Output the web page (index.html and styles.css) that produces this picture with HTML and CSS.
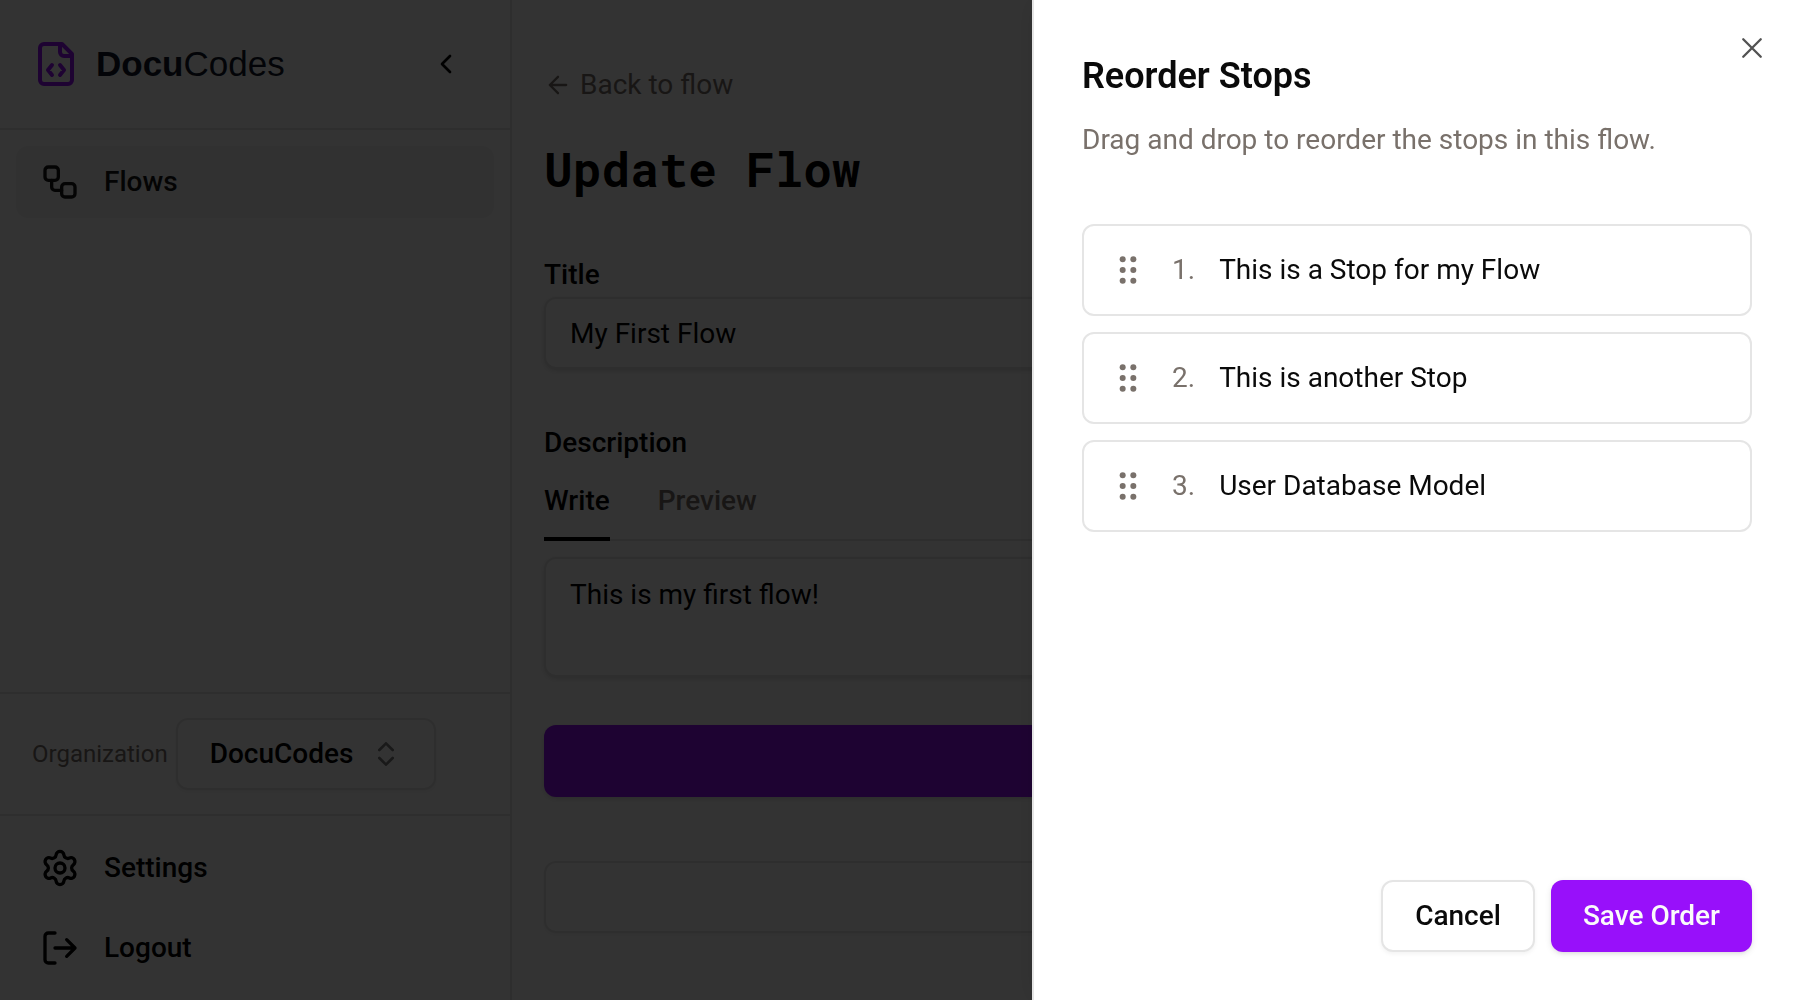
FILE: index.html
```html
<!DOCTYPE html>
<html lang="en">
<head>
<meta charset="utf-8">
<meta name="viewport" content="width=device-width, initial-scale=1">
<title>Update Flow - DocuCodes</title>
<link rel="stylesheet" href="styles.css">
</head>
<body>
<div class="app">
  <aside class="sidebar">
    <header class="brand">
      <a class="brand-link" href="#">
        <svg class="icon brand-icon" viewBox="0 0 24 24" aria-hidden="true"><path d="M10 12.5 8 15l2 2.5M14 12.5l2 2.5-2 2.5M14 2v4a2 2 0 0 0 2 2h4M15 2H6a2 2 0 0 0-2 2v16a2 2 0 0 0 2 2h12a2 2 0 0 0 2-2V7z"/></svg>
        <span class="brand-name"><strong>Docu</strong>Codes</span>
      </a>
      <button class="collapse" type="button" aria-label="Collapse sidebar">
        <svg class="icon icon-md" viewBox="0 0 24 24" aria-hidden="true"><path d="m15 18-6-6 6-6"/></svg>
      </button>
    </header>
    <nav class="nav nav-main">
      <a class="nav-item active" href="#">
        <svg class="icon icon-lg" viewBox="0 0 24 24" aria-hidden="true"><rect x="3" y="3" width="8" height="8" rx="2"/><path d="M7 11v4a2 2 0 0 0 2 2h4"/><rect x="13" y="13" width="8" height="8" rx="2"/></svg>
        Flows
      </a>
    </nav>
    <div class="org">
      <label for="org">Organization</label>
      <div class="org-picker">
        <select id="org"><option>DocuCodes</option></select>
        <svg class="icon icon-md org-caret" viewBox="0 0 24 24" aria-hidden="true"><path d="m7 15 5 5 5-5M7 9l5-5 5 5"/></svg>
      </div>
    </div>
    <nav class="nav">
      <a class="nav-item" href="#">
        <svg class="icon icon-lg" viewBox="0 0 24 24" aria-hidden="true"><path d="M9.671 4.136a2.34 2.34 0 0 1 4.659 0 2.34 2.34 0 0 0 3.319 1.915 2.34 2.34 0 0 1 2.33 4.033 2.34 2.34 0 0 0 0 3.831 2.34 2.34 0 0 1-2.33 4.033 2.34 2.34 0 0 0-3.319 1.915 2.34 2.34 0 0 1-4.659 0 2.34 2.34 0 0 0-3.32-1.915 2.34 2.34 0 0 1-2.33-4.033 2.34 2.34 0 0 0 0-3.831A2.34 2.34 0 0 1 6.35 6.051a2.34 2.34 0 0 0 3.319-1.915"/><circle cx="12" cy="12" r="3"/></svg>
        Settings
      </a>
      <a class="nav-item" href="#">
        <svg class="icon icon-lg" viewBox="0 0 24 24" aria-hidden="true"><path d="M9 21H5a2 2 0 0 1-2-2V5a2 2 0 0 1 2-2h4M16 17l5-5-5-5M21 12H9"/></svg>
        Logout
      </a>
    </nav>
  </aside>

  <main class="main">
    <a class="back" href="#">
      <svg class="icon icon-sm" viewBox="0 0 24 24" aria-hidden="true"><path d="m12 19-7-7 7-7M19 12H5"/></svg>
      Back to flow
    </a>
    <h1>Update Flow</h1>
    <form class="form">
      <div class="field">
        <label for="title">Title</label>
        <input id="title" class="control" type="text" value="My First Flow">
      </div>
      <div class="field">
        <label for="description">Description</label>
        <div class="tabs" role="tablist">
          <button class="tab selected" type="button" role="tab" aria-selected="true">Write</button>
          <button class="tab" type="button" role="tab" aria-selected="false">Preview</button>
        </div>
        <textarea id="description" class="control">This is my first flow!</textarea>
      </div>
      <button class="btn primary" type="submit" aria-label="Save"></button>
    </form>
    <button class="btn outline" type="button" aria-label="Reorder"></button>
  </main>
</div>

<div class="overlay"></div>

<section class="drawer" role="dialog" aria-labelledby="drawer-title">
  <button class="close" type="button" aria-label="Close">
    <svg viewBox="0 0 15 15" aria-hidden="true"><path d="M3.4 3.4l8.2 8.2M11.6 3.4l-8.2 8.2"/></svg>
  </button>
  <h2 id="drawer-title">Reorder Stops</h2>
  <p class="hint">Drag and drop to reorder the stops in this flow.</p>
  <ol class="stops">
    <li class="stop">
      <svg class="grip" viewBox="0 0 15 15" aria-hidden="true"><circle cx="5.5" cy="3.5" r="1.125"/><circle cx="9.5" cy="3.5" r="1.125"/><circle cx="5.5" cy="7.5" r="1.125"/><circle cx="9.5" cy="7.5" r="1.125"/><circle cx="5.5" cy="11.5" r="1.125"/><circle cx="9.5" cy="11.5" r="1.125"/></svg>
      <span class="num">1.</span><span>This is a Stop for my Flow</span>
    </li>
    <li class="stop">
      <svg class="grip" viewBox="0 0 15 15" aria-hidden="true"><circle cx="5.5" cy="3.5" r="1.125"/><circle cx="9.5" cy="3.5" r="1.125"/><circle cx="5.5" cy="7.5" r="1.125"/><circle cx="9.5" cy="7.5" r="1.125"/><circle cx="5.5" cy="11.5" r="1.125"/><circle cx="9.5" cy="11.5" r="1.125"/></svg>
      <span class="num">2.</span><span>This is another Stop</span>
    </li>
    <li class="stop">
      <svg class="grip" viewBox="0 0 15 15" aria-hidden="true"><circle cx="5.5" cy="3.5" r="1.125"/><circle cx="9.5" cy="3.5" r="1.125"/><circle cx="5.5" cy="7.5" r="1.125"/><circle cx="9.5" cy="7.5" r="1.125"/><circle cx="5.5" cy="11.5" r="1.125"/><circle cx="9.5" cy="11.5" r="1.125"/></svg>
      <span class="num">3.</span><span>User Database Model</span>
    </li>
  </ol>
  <footer class="actions">
    <button class="btn outline" type="button">Cancel</button>
    <button class="btn primary" type="button">Save Order</button>
  </footer>
</section>
</body>
</html>
```

FILE: styles.css
```css
:root {
  --ink: #0a0a0a;
  --text: #000;
  --muted: #79716b;
  --line: #e5e5e5;
  --accent: #9810fa;
  --shadow: 0 2px 6px rgba(0, 0, 0, 0.1), 0 2px 4px -2px rgba(0, 0, 0, 0.1);
}

* {
  box-sizing: border-box;
}

body {
  margin: 0;
  background: #fff;
  color: var(--text);
  font: 400 28px/40px Roboto, "Liberation Sans", sans-serif;
}

h1, h2, p, ol {
  margin: 0;
  padding: 0;
}

a {
  color: inherit;
  text-decoration: none;
}

button, input, select, textarea {
  font: inherit;
  color: inherit;
  margin: 0;
}

.icon {
  flex: none;
  fill: none;
  stroke: currentColor;
  stroke-width: 2;
  stroke-linecap: round;
  stroke-linejoin: round;
}

.icon-sm { width: 28px; height: 28px; }
.icon-md { width: 32px; height: 32px; }
.icon-lg { width: 40px; height: 40px; }

.app {
  display: grid;
  grid-template-columns: 512px 1fr;
  min-height: 100vh;
}

/* Sidebar */
.sidebar {
  display: flex;
  flex-direction: column;
  border-right: 2px solid var(--line);
}

.brand {
  display: flex;
  align-items: center;
  justify-content: space-between;
  padding: 32px;
  border-bottom: 2px solid var(--line);
}

.brand-link {
  display: flex;
  align-items: center;
  gap: 16px;
  line-height: 64px;
}

.brand-icon {
  width: 48px;
  height: 48px;
  color: var(--accent);
}

.brand-name {
  color: #101828;
  font-family: "Liberation Sans", Arial, sans-serif;
  font-size: 35px;
}

.collapse {
  display: flex;
  padding: 16px;
  border: 0;
  background: none;
}

.nav {
  display: flex;
  flex-direction: column;
  gap: 8px;
  padding: 16px;
}

.nav-main {
  flex: 1;
}

.nav-item {
  display: flex;
  align-items: center;
  gap: 24px;
  padding: 16px 24px;
  border-radius: 12px;
  font-weight: 500;
}

.nav-item.active {
  background: #f5f5f5;
  color: #171717;
}

.org {
  display: flex;
  align-items: center;
  gap: 8px;
  padding: 24px 32px;
  border-top: 2px solid var(--line);
  border-bottom: 2px solid var(--line);
}

.org label {
  color: var(--muted);
  font-size: 24px;
}

.org-picker {
  position: relative;
}

.org-picker select {
  display: block;
  appearance: none;
  height: 72px;
  padding: 0 80px 0 32px;
  border: 2px solid var(--line);
  border-radius: 12px;
  background: #fff;
  box-shadow: 0 2px 4px rgba(0, 0, 0, 0.05);
  font-weight: 500;
}

.org-caret {
  position: absolute;
  top: 20px;
  right: 34px;
  opacity: 0.5;
  pointer-events: none;
}

/* Page */
.main {
  display: flex;
  flex-direction: column;
  padding: 65px 32px;
}

.back {
  display: flex;
  align-items: center;
  gap: 8px;
  color: var(--muted);
}

h1 {
  margin-top: 32px;
  font: 700 48px/64px "Roboto Mono", "DejaVu Sans Mono", monospace;
}

.form {
  display: flex;
  flex-direction: column;
  gap: 48px;
  margin-top: 54px;
}

.field {
  display: flex;
  flex-direction: column;
}

.field + .field {
  margin-top: 6px;
}

.field label {
  margin-bottom: 2px;
  font-weight: 500;
}

.control {
  width: 100%;
  height: 72px;
  padding: 0 24px;
  border: 2px solid var(--line);
  border-radius: 12px;
  background: #fff;
  box-shadow: var(--shadow);
}

textarea.control {
  height: 120px;
  padding: 16px 24px;
  resize: none;
}

.tabs {
  display: flex;
  gap: 48px;
  margin-bottom: 16px;
  box-shadow: inset 0 -2px var(--line);
}

.tab {
  padding: 16px 0;
  border: 0;
  border-bottom: 4px solid transparent;
  background: none;
  color: var(--muted);
  font-weight: 500;
}

.tab.selected {
  border-bottom-color: var(--text);
  color: var(--text);
}

.btn {
  height: 72px;
  padding: 0 32px;
  border: 0;
  border-radius: 12px;
  font-weight: 500;
}

.btn.primary {
  background: var(--accent);
  color: #fafafa;
  box-shadow: var(--shadow);
}

.btn.outline {
  border: 2px solid var(--line);
  background: #fff;
  box-shadow: 0 2px 4px rgba(0, 0, 0, 0.05);
}

.main > .btn {
  margin-top: 64px;
}

/* Drawer */
.overlay {
  position: fixed;
  inset: 0;
  background: rgba(0, 0, 0, 0.8);
}

.drawer {
  position: fixed;
  inset: 0 0 0 auto;
  display: flex;
  flex-direction: column;
  width: 768px;
  padding: 48px;
  border-left: 2px solid var(--line);
  background: #fff;
  color: var(--ink);
  box-shadow: 0 0 24px rgba(0, 0, 0, 0.1);
}

.drawer h2 {
  font-size: 36px;
  line-height: 56px;
  font-weight: 600;
}

.hint {
  margin-top: 16px;
  color: var(--muted);
}

.close {
  position: absolute;
  top: 32px;
  right: 32px;
  width: 32px;
  height: 32px;
  padding: 0;
  border: 0;
  background: none;
  opacity: 0.7;
}

.close svg {
  display: block;
  fill: none;
  stroke: currentColor;
  stroke-width: 1.1;
  stroke-linecap: round;
}

.stops {
  display: flex;
  flex: 1;
  flex-direction: column;
  gap: 16px;
  margin-top: 64px;
  list-style: none;
}

.stop {
  display: flex;
  align-items: center;
  gap: 24px;
  padding: 24px;
  border: 2px solid var(--line);
  border-radius: 12px;
}

.grip {
  width: 40px;
  height: 40px;
  fill: var(--muted);
}

.num {
  color: var(--muted);
}

.actions {
  display: flex;
  justify-content: flex-end;
  gap: 16px;
}
```
